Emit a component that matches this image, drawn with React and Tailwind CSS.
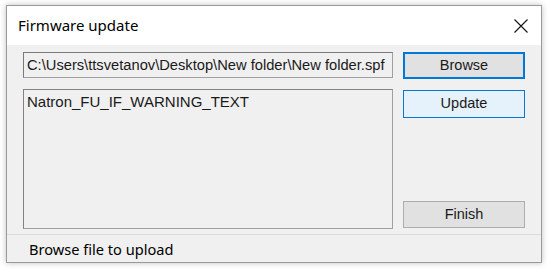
import React from 'react';

const ui = { fontFamily: '"Liberation Sans", Arial, sans-serif' };
const seg = { fontFamily: '"Noto Sans", "Open Sans", sans-serif' };

export default function App() {
    return (
        <div className="w-[548px] h-[271px] bg-white overflow-hidden pt-[5px] pl-[6px]">
            <div className="w-[536px] h-[258px] border border-[#9a9a9a] bg-[#f0f0f0] flex flex-col shadow-[0_0_6px_rgba(0,0,0,0.25)]">
                {/* title bar */}
                <div className="h-[39px] bg-white flex items-center justify-between pl-[11px] pr-[13px]">
                    <span className="text-[15px] text-black" style={seg}>Firmware update</span>
                    <svg width="14" height="14" viewBox="0 0 14 14">
                        <path d="M0.5 0.5 L13.5 13.5 M13.5 0.5 L0.5 13.5" stroke="#111" strokeWidth="1.1" />
                    </svg>
                </div>

                {/* body */}
                <div className="flex-1 flex gap-[10px] pl-[16px] pr-[16px] pt-[7px]" style={ui}>
                    <div className="w-[370px] flex flex-col gap-[11px]">
                        <div className="h-[26px] bg-[#f0f0f0] border border-[#a0a0a0] border-t-[#7a7a7a] border-l-[#7a7a7a] flex items-center pl-[3px] text-[14.7px] text-[#1a1a1a] whitespace-nowrap overflow-hidden">
                            C:\Users\ttsvetanov\Desktop\New folder\New folder.spf
                        </div>
                        <div className="h-[140px] bg-[#f0f0f0] border border-[#a0a0a0] border-t-[#828282] border-l-[#828282] pl-[3px] pt-[1px] text-[15px] text-[#1a1a1a]">
                            Natron_FU_IF_WARNING_TEXT
                        </div>
                    </div>
                    <div className="w-[122px] flex flex-col">
                        <button className="h-[27px] bg-[#e1e1e1] border-2 border-[#0078d7] text-[14.5px] text-[#1a1a1a]">Browse</button>
                        <button className="h-[28px] mt-[11px] bg-[#e5f1fb] border border-[#0078d7] text-[14.5px] text-[#1a1a1a]">Update</button>
                        <div className="flex-1" />
                        <button className="h-[27px] mb-[6px] bg-[#e1e1e1] border border-[#adadad] text-[14.5px] text-[#1a1a1a]">Finish</button>
                    </div>
                </div>

                {/* status bar */}
                <div className="h-[28px] border-t border-[#dcdcdc] flex items-center pl-[22px] pt-[2px]">
                    <span className="text-[14.6px] text-black" style={seg}>Browse file to upload</span>
                </div>
            </div>
        </div>
    );
}
